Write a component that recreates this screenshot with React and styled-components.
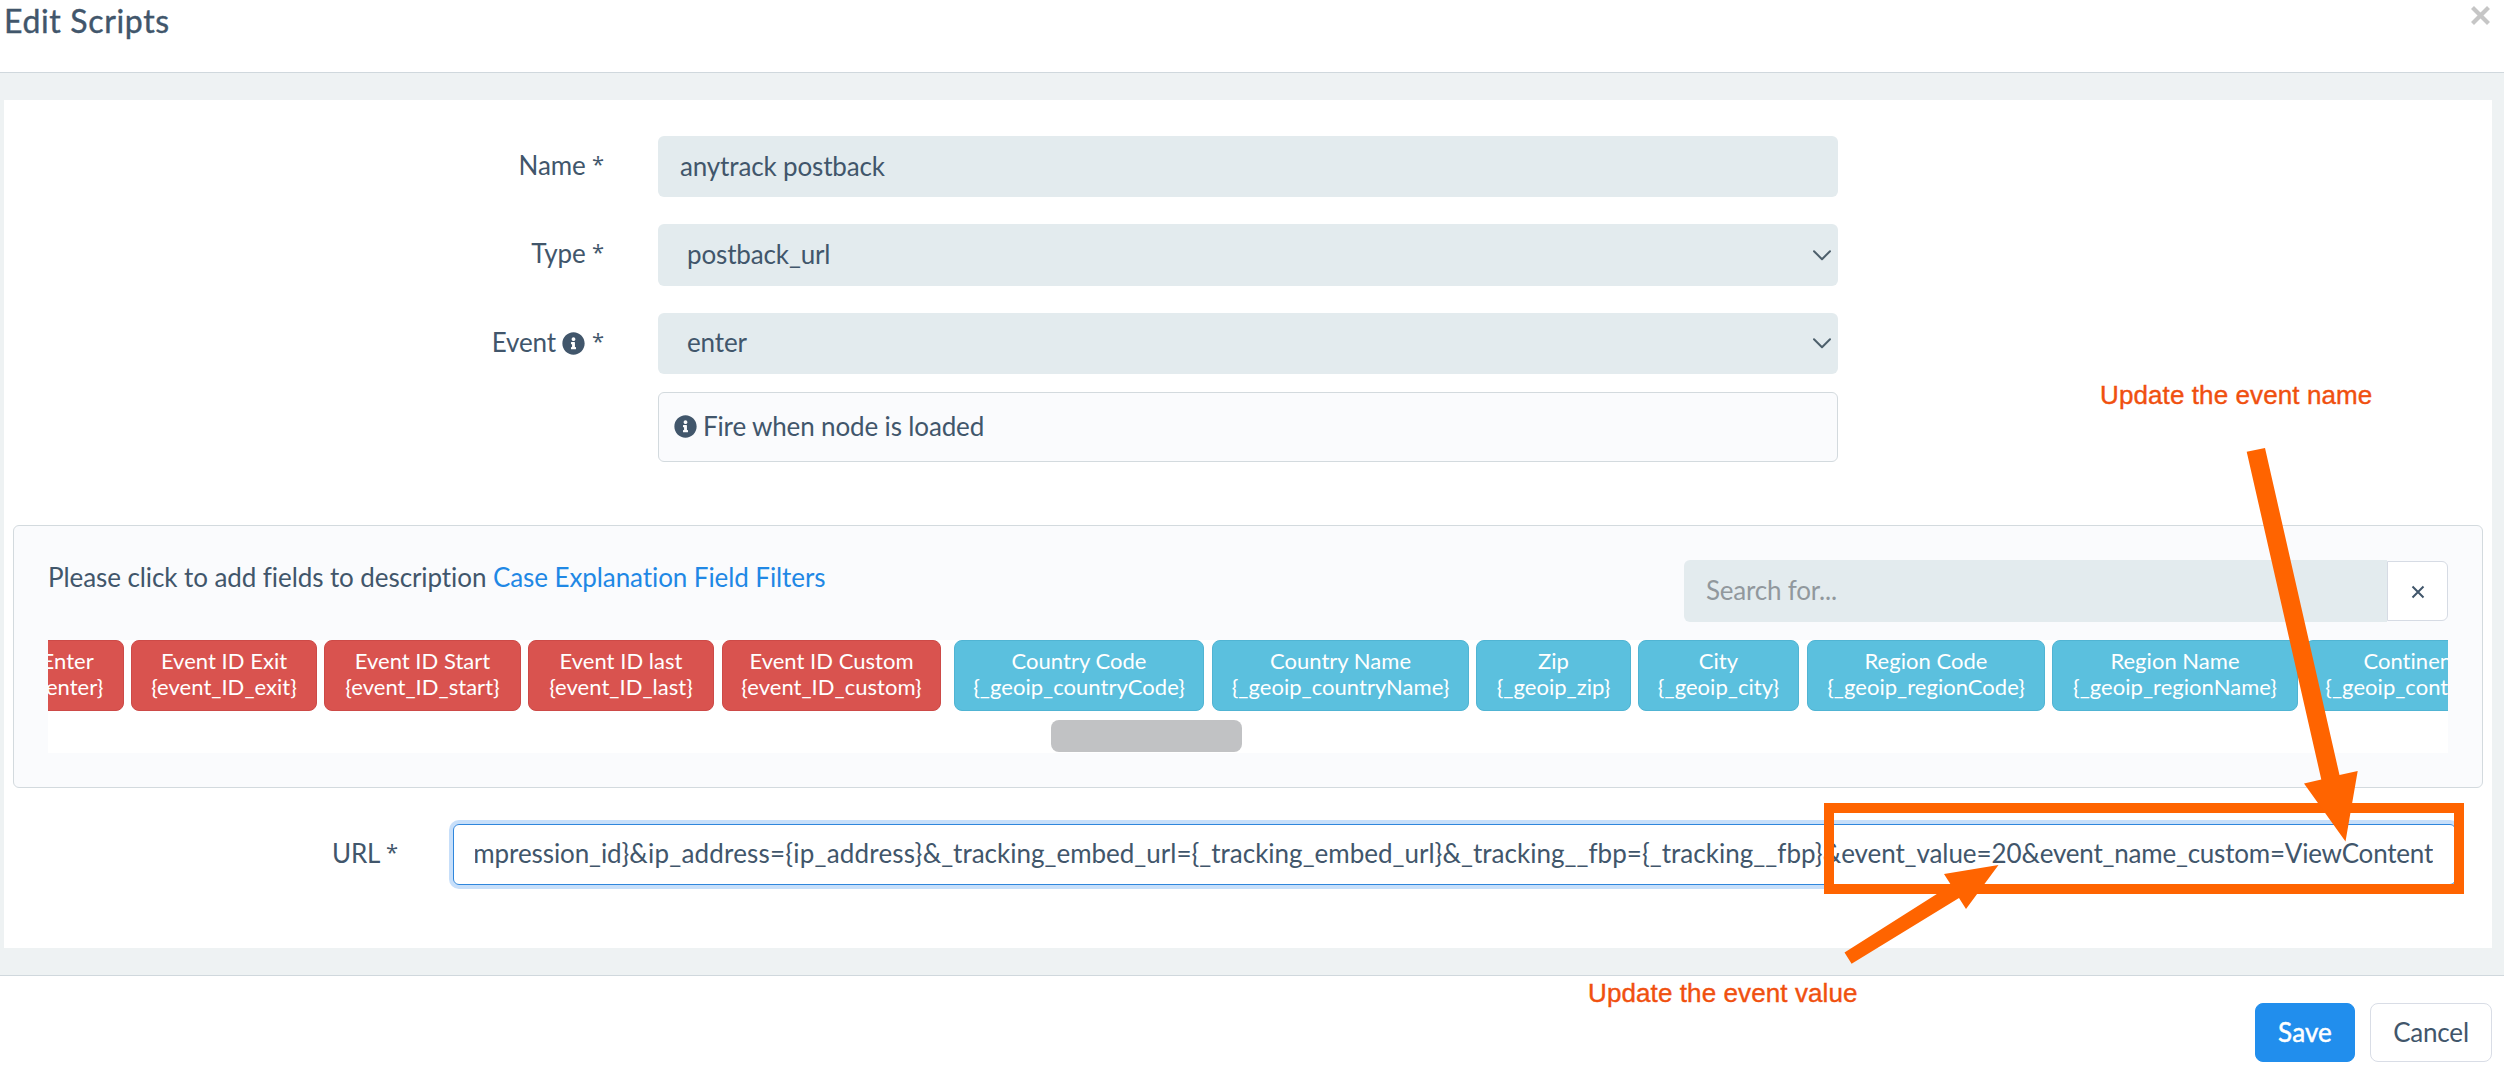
import React from 'react'
import styled, { createGlobalStyle } from 'styled-components'
import { FaInfoCircle } from 'react-icons/fa'

const GlobalStyle = createGlobalStyle`
  * {
    box-sizing: border-box;
  }

  body {
    margin: 0;
    background: #fff;
    color: #41566b;
    font-family: Lato, 'Open Sans', sans-serif;
    font-size: 26px;
    line-height: 32px;
    letter-spacing: -0.14px;
  }
`

const Modal = styled.div`
  position: relative;
  display: flex;
  flex-direction: column;
  width: 2504px;
  height: 1080px;
  overflow: hidden;
`

const Header = styled.header`
  display: flex;
  justify-content: space-between;
  height: 73px;
  padding: 0 14px 0 4px;
  border-bottom: 1px solid #d0d8dd;

  h4 {
    margin: 0;
    font-size: 32px;
    font-weight: 400;
    line-height: 42px;
    letter-spacing: 0.65px;
    -webkit-text-stroke: 0.4px #41566b;
  }

  svg {
    margin-top: 6px;
  }
`

const Body = styled.main`
  height: 902px;
  padding: 27px 12px 27px 4px;
  background: #eef2f3;
`

const Card = styled.section`
  height: 848px;
  padding-top: 36px;
  background: #fff;
`

const FormRow = styled.div`
  display: flex;
  margin-bottom: 27px;
`

const Label = styled.label`
  width: ${p => p.$width}px;
  padding-top: 13px;
  text-align: right;

  svg {
    font-size: 23px;
    vertical-align: -3px;
  }
`

const Star = styled.span`
  font-family: 'Open Sans', sans-serif;
  font-size: 22px;
  line-height: 1;
  vertical-align: 3px;
`

const Field = styled.div`
  display: flex;
  align-items: center;
  justify-content: space-between;
  width: 1180px;
  height: ${p => p.$height || 61}px;
  margin-left: 54px;
  padding: 0 7px ${p => (p.$select ? 3 : 1)}px ${p => (p.$select ? 29 : 22)}px;
  border-radius: 6px;
  background: #e3ebee;

  svg {
    margin-top: 3px;
  }
`

const Info = styled.div`
  display: flex;
  align-items: center;
  gap: 6px;
  width: 1180px;
  height: 70px;
  margin: -9px 0 63px 654px;
  padding: 0 15px 2px;
  border: 1px solid #d3dade;
  border-radius: 6px;
  background: #fafbfd;

  svg {
    font-size: 23px;
  }
`

const Panel = styled.section`
  height: 263px;
  margin: 0 9px;
  padding: 34px 34px 0;
  border: 1px solid #d3dade;
  border-radius: 6px;
  background: #fafbfd;
`

const PanelTop = styled.div`
  display: flex;
  justify-content: space-between;
  height: 62px;
  margin-bottom: 18px;

  a {
    color: #1f88e5;
  }
`

const Hint = styled.div`
  padding-top: 1px;
  letter-spacing: -0.08px;
`

const SearchGroup = styled.div`
  display: flex;
  align-items: center;
`

const SearchInput = styled.div`
  width: 703px;
  height: 62px;
  padding: 14px 22px;
  border-radius: 6px 0 0 6px;
  background: #e3ebee;
  color: #91989d;
  letter-spacing: -0.2px;
`

const ClearButton = styled.button`
  display: flex;
  align-items: center;
  justify-content: center;
  width: 61px;
  height: 60px;
  padding: 2px 0 0;
  border: 1px solid #d6dbe4;
  border-radius: 0 6px 6px 0;
  background: #fff;
`

const Strip = styled.div`
  height: 113px;
  overflow: hidden;
  background: #fff;
`

const Chips = styled.div`
  display: flex;
  margin-left: -126px;
`

const Chip = styled.div`
  flex: none;
  width: ${p => p.$width}px;
  height: 71px;
  margin-right: ${p => p.$gap || 7}px;
  padding-top: 7px;
  border: 1px solid ${p => (p.$geo ? '#50b4d3' : '#cd4a47')};
  border-radius: 8px;
  background: ${p => (p.$geo ? '#5bc0de' : '#d9534f')};
  color: #fff;
  font-size: 22px;
  line-height: 26px;
  letter-spacing: 0.03px;
  text-align: center;
  white-space: nowrap;
`

const ScrollThumb = styled.div`
  width: 191px;
  height: 32px;
  margin: 9px 0 0 1003px;
  border-radius: 8px;
  background: #c1c2c4;
`

const UrlRow = styled.div`
  display: flex;
  margin-top: 36px;
`

const UrlInput = styled.div`
  display: flex;
  width: 2003px;
  height: 61px;
  margin-left: 55px;
  padding: 0 22px 0 21px;
  border: 1px solid #2f86dc;
  border-radius: 6px;
  box-shadow: 0 0 0 4px #c7dffa;
`

const UrlText = styled.div`
  display: flex;
  flex: 1;
  justify-content: flex-end;
  overflow: hidden;
  padding-top: 12px;
  white-space: nowrap;
`

const UrlPart = styled.span`
  letter-spacing: ${p => p.$spacing}px;
`

const Footer = styled.footer`
  display: flex;
  justify-content: flex-end;
  gap: 15px;
  padding: 27px 12px 0;
  border-top: 1px solid #d0d8dd;
`

const Button = styled.button`
  width: ${p => (p.$primary ? 100 : 122)}px;
  height: 59px;
  padding: 0 0 1px;
  border: 1px solid ${p => (p.$primary ? '#218eed' : '#d9dde6')};
  border-radius: 8px;
  background: ${p => (p.$primary ? '#218eed' : '#fff')};
  color: ${p => (p.$primary ? '#fff' : '#41566b')};
  font: inherit;
  letter-spacing: ${p => (p.$primary ? 0.1 : -0.2)}px;
  -webkit-text-stroke: ${p => (p.$primary ? '0.5px #fff' : '0')};
`

// Annotations float over the form
const Highlight = styled.div`
  position: absolute;
  left: 1824px;
  top: 803px;
  width: 640px;
  height: 91px;
  border: 10px solid #ff6400;
`

const Arrows = styled.svg`
  position: absolute;
  left: 0;
  top: 0;
  fill: #ff6400;
`

const Note = styled.div`
  position: absolute;
  left: ${p => p.$left}px;
  top: ${p => p.$top}px;
  color: #f0500f;
  font-family: 'Liberation Sans', Arial, sans-serif;
  line-height: 30px;
  letter-spacing: 0.1px;
  white-space: nowrap;
  -webkit-text-stroke: 0.4px #f0500f;
`

const Chevron = () => (
  <svg width="18" height="11" viewBox="0 0 18 11" fill="none" stroke="#4d5f6b" strokeWidth="2" strokeLinecap="round" strokeLinejoin="round">
    <path d="M1 1.2l8 8 8-8" />
  </svg>
)

const Cross = ({ size, color, width }) => (
  <svg width={size} height={size} viewBox={`0 0 ${size} ${size}`} stroke={color} strokeWidth={width}>
    <path d={`M1.5 1.5L${size - 1.5} ${size - 1.5}M${size - 1.5} 1.5L1.5 ${size - 1.5}`} />
  </svg>
)

const chips = [
  { name: 'Event ID Enter', token: '{event_ID_enter}', width: 202 },
  { name: 'Event ID Exit', token: '{event_ID_exit}', width: 186 },
  { name: 'Event ID Start', token: '{event_ID_start}', width: 197 },
  { name: 'Event ID last', token: '{event_ID_last}', width: 186, gap: 8 },
  { name: 'Event ID Custom', token: '{event_ID_custom}', width: 219, gap: 13 },
  { name: 'Country Code', token: '{_geoip_countryCode}', width: 250, gap: 8, geo: true },
  { name: 'Country Name', token: '{_geoip_countryName}', width: 257, geo: true },
  { name: 'Zip', token: '{_geoip_zip}', width: 155, geo: true },
  { name: 'City', token: '{_geoip_city}', width: 161, gap: 8, geo: true },
  { name: 'Region Code', token: '{_geoip_regionCode}', width: 238, geo: true },
  { name: 'Region Name', token: '{_geoip_regionName}', width: 246, geo: true },
  { name: 'Continent Code', token: '{_geoip_continentCode}', width: 270, geo: true }
]

const urlParts = [
  ['{impression_id}', -0.09],
  ['&ip_address={ip_address}', 0.2],
  ['&_tracking_embed_url={_tracking_embed_url}', 0],
  ['&_tracking__fbp={_tracking__fbp}', 0.03],
  ['&event_value=20', -0.08],
  ['&event_name_custom=ViewContent', -0.22]
]

const App = () => (
  <Modal>
    <GlobalStyle />
    <Header>
      <h4>Edit Scripts</h4>
      <Cross size={19} color="#c6c6c6" width={4.2} />
    </Header>
    <Body>
      <Card>
        <FormRow>
          <Label $width={600}>Name <Star>*</Star></Label>
          <Field>anytrack postback</Field>
        </FormRow>
        <FormRow>
          <Label $width={600}>Type <Star>*</Star></Label>
          <Field $select $height={62}>postback_url <Chevron /></Field>
        </FormRow>
        <FormRow>
          <Label $width={600}>Event <FaInfoCircle /> <Star>*</Star></Label>
          <Field $select>enter <Chevron /></Field>
        </FormRow>
        <Info><FaInfoCircle /> Fire when node is loaded</Info>

        <Panel>
          <PanelTop>
            <Hint>Please click to add fields to description <a>Case Explanation Field Filters</a></Hint>
            <SearchGroup>
              <SearchInput>Search for...</SearchInput>
              <ClearButton><Cross size={14} color="#41566b" width={2} /></ClearButton>
            </SearchGroup>
          </PanelTop>
          <Strip>
            <Chips>
              {chips.map(chip => (
                <Chip key={chip.token} $width={chip.width} $gap={chip.gap} $geo={chip.geo}>
                  {chip.name}<br />{chip.token}
                </Chip>
              ))}
            </Chips>
            <ScrollThumb />
          </Strip>
        </Panel>

        <UrlRow>
          <Label $width={394}>URL <Star>*</Star></Label>
          <UrlInput>
            <UrlText>
              {urlParts.map(([text, spacing]) => <UrlPart key={text} $spacing={spacing}>{text}</UrlPart>)}
            </UrlText>
          </UrlInput>
        </UrlRow>
      </Card>
    </Body>
    <Footer>
      <Button $primary>Save</Button>
      <Button>Cancel</Button>
    </Footer>

    <Highlight />
    <Arrows width="2504" height="1080">
      <polygon points="2246.7,451.7 2265,448 2339.5,775 2357.7,771 2345.5,841.5 2304,783.5 2321.3,779.5" />
      <polygon points="1844.5,952.5 1951,885 1944,874 1998.5,865 1966,909 1959,898 1851.6,963.7" />
    </Arrows>
    <Note $left={2100} $top={380}>Update the event name</Note>
    <Note $left={1588} $top={978}>Update the event value</Note>
  </Modal>
)

export default App
